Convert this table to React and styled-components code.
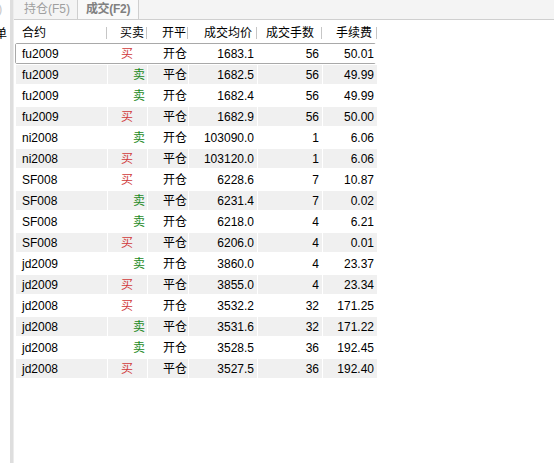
import styled, { createGlobalStyle } from "styled-components";

const GlobalStyle = createGlobalStyle`
  html, body {
    margin: 0;
    padding: 0;
    background: #ffffff;
    overflow: hidden;
  }
  body {
    font-family: "Liberation Sans", "Noto Sans CJK SC", sans-serif;
    font-size: 12px;
    color: #000;
  }
`;

const trades = [
  ["fu2009", "买", "开仓", "1683.1", "56", "50.01"],
  ["fu2009", "卖", "平仓", "1682.5", "56", "49.99"],
  ["fu2009", "卖", "开仓", "1682.4", "56", "49.99"],
  ["fu2009", "买", "平仓", "1682.9", "56", "50.00"],
  ["ni2008", "卖", "开仓", "103090.0", "1", "6.06"],
  ["ni2008", "买", "平仓", "103120.0", "1", "6.06"],
  ["SF008", "买", "开仓", "6228.6", "7", "10.87"],
  ["SF008", "卖", "平仓", "6231.4", "7", "0.02"],
  ["SF008", "卖", "开仓", "6218.0", "4", "6.21"],
  ["SF008", "买", "平仓", "6206.0", "4", "0.01"],
  ["jd2009", "卖", "开仓", "3860.0", "4", "23.37"],
  ["jd2009", "买", "平仓", "3855.0", "4", "23.34"],
  ["jd2008", "买", "开仓", "3532.2", "32", "171.25"],
  ["jd2008", "卖", "平仓", "3531.6", "32", "171.22"],
  ["jd2008", "卖", "开仓", "3528.5", "36", "192.45"],
  ["jd2008", "买", "平仓", "3527.5", "36", "192.40"],
];

function App() {
  return (
    <Page>
      <GlobalStyle />
      <LeftPane>
        <LeftStub>)</LeftStub>
        <LeftHead>单</LeftHead>
      </LeftPane>
      <Splitter />
      <Main>
        <TabBar>
          <Tab>持仓(F5)</Tab>
          <Tab active>成交(F2)</Tab>
        </TabBar>
        <Table>
          <HeaderRow>
            <HeadCell align="left">合约</HeadCell>
            <HeadCell pad="2px">买卖</HeadCell>
            <HeadCell align="left" pad="15px">开平</HeadCell>
            <HeadCell pad="4px">成交均价</HeadCell>
            <HeadCell pad="7px">成交手数</HeadCell>
            <HeadCell pad="4px">手续费</HeadCell>
          </HeaderRow>
          {trades.map((t, i) => (
            <Row key={i} selected={i === 0} shaded={i % 2 === 1}>
              <Cell align="left">{t[0]}</Cell>
              <Side buy={t[1] === "买"}>{t[1]}</Side>
              <Cell align="left" pad="15px">{t[2]}</Cell>
              <Cell>{t[3]}</Cell>
              <Cell>{t[4]}</Cell>
              <Cell>{t[5]}</Cell>
            </Row>
          ))}
        </Table>
      </Main>
    </Page>
  );
}

export default App;

const Page = styled.div`
  display: flex;
  width: 554px;
  height: 463px;
  background: #fff;
`;

const LeftPane = styled.div`
  width: 10px;
  overflow: hidden;
  display: flex;
  flex-direction: column;
`;

const LeftStub = styled.div`
  height: 20px;
  line-height: 18px;
  color: #c8c8c8;
  margin-left: -2px;
  font-size: 13px;
`;

const LeftHead = styled.div`
  margin-top: 6px;
  margin-left: -5px;
  height: 16px;
  line-height: 16px;
  white-space: nowrap;
`;

const Splitter = styled.div`
  width: 3px;
  background: #dedede;
  border-right: 1px solid #ececec;
`;

const Main = styled.div`
  flex: 1;
  display: flex;
  flex-direction: column;
  background: #fff;
`;

const TabBar = styled.div`
  display: flex;
  height: 19px;
  background: #f4f4f4;
  border-bottom: 1px solid #cfcfcf;
  padding-left: 3px;
`;

const Tab = styled.div`
  width: 60px;
  line-height: 19px;
  text-align: center;
  color: ${p => (p.active ? "#808080" : "#9f9f9f")};
  font-weight: ${p => (p.active ? "bold" : "normal")};
  font-size: 12px;
  background: ${p => (p.active ? "#f9f9f9" : "transparent")};
  border-left: ${p => (p.active ? "1px solid #cfcfcf" : "none")};
  border-right: ${p => (p.active ? "1px solid #cfcfcf" : "none")};
  letter-spacing: ${p => (p.active ? "-0.3px" : "0")};
`;

const Table = styled.div`
  display: flex;
  flex-direction: column;
  margin: 1px 0 0 1px;
  width: 361px;
`;

const columns = "91px 39px 40px 68px 64px 54px";

const HeaderRow = styled.div`
  display: grid;
  grid-template-columns: ${columns};
  column-gap: 1px;
  height: 22px;
  box-sizing: border-box;
  padding-top: 4px;
  align-items: start;
`;

const HeadCell = styled.div`
  position: relative;
  text-align: ${p => p.align || "right"};
  padding: ${p =>
    p.align === "left" ? `0 0 0 ${p.pad || "7px"}` : `0 ${p.pad || "5px"} 0 0`};
  white-space: nowrap;
  line-height: 16px;

  &::after {
    content: "";
    position: absolute;
    right: -1px;
    top: 2px;
    width: 1px;
    height: 12px;
    background: #c6c6c6;
  }
`;

const Row = styled.div`
  display: grid;
  grid-template-columns: ${columns};
  column-gap: 1px;
  height: 21px;
  align-items: stretch;
  box-sizing: border-box;
  border: 1px solid ${p => (p.selected ? "#a9a9a9" : "transparent")};
  border-radius: ${p => (p.selected ? "2px" : "0")};

  & > div {
    background: ${p => (p.shaded ? "#f0f0f0" : "#fff")};
  }
`;

const Cell = styled.div`
  display: flex;
  align-items: center;
  justify-content: ${p => (p.align === "left" ? "flex-start" : "flex-end")};
  padding: ${p =>
    p.align === "left" ? `0 0 0 ${p.pad || "6px"}` : "0 3px 0 0"};
  white-space: nowrap;
  line-height: 16px;
`;

const Side = styled(Cell)`
  color: ${p => (p.buy ? "#d03a3a" : "#1e8a1e")};
  padding-right: ${p => (p.buy ? "14px" : "2px")};
`;
